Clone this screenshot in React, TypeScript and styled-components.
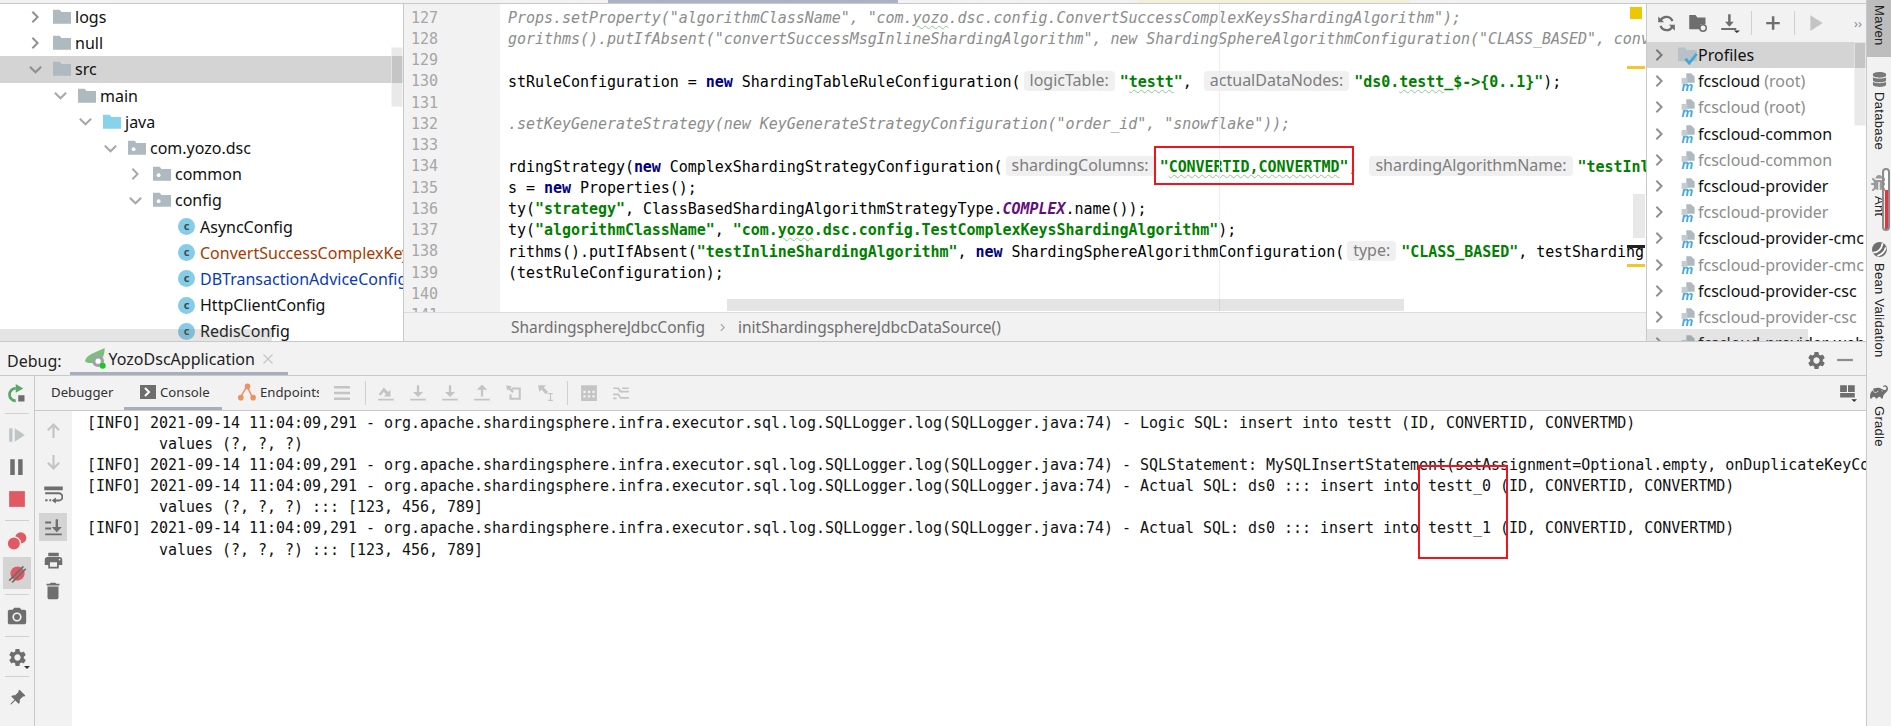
import styled, { createGlobalStyle } from "styled-components";
import { ReactNode } from "react";
import { MdSettings, MdPhotoCamera, MdPrint, MdDelete } from "react-icons/md";
import { BsPinAngleFill } from "react-icons/bs";
import { FaBug, FaDatabase } from "react-icons/fa";
import { SiGradle } from "react-icons/si";

const GlobalStyle = createGlobalStyle`
  html, body {
    margin: 0;
    padding: 0;
    background: #fff;
  }
`;

const UI_FONT = `"Noto Sans", "Open Sans", sans-serif`;
const MONO_FONT = `"DejaVu Sans Mono", "Liberation Mono", monospace`;
const PANEL = "#f2f2f2";
const LINE = "#c9c9c9";
const DARK = "#6e6e6e";

const Page = styled.div`
  position: relative;
  width: 1891px;
  height: 726px;
  overflow: hidden;
  display: flex;
  background: ${PANEL};
  font-family: ${UI_FONT};
`;

const Main = styled.div`
  flex: 1;
  min-width: 0;
  display: flex;
  flex-direction: column;
`;

const TopStrip = styled.div`
  height: 3px;
  display: flex;
  flex: none;
`;

const StripPiece = styled.div<{ $w: number; $bg?: string }>`
  width: ${(p) => p.$w}px;
  background: ${(p) => p.$bg ?? "transparent"};
`;

const TopPane = styled.div`
  height: 339px;
  flex: none;
  display: flex;
  border-top: 1px solid ${LINE};
  border-bottom: 1px solid ${LINE};
  box-sizing: border-box;
`;

/* project tree */
const Tree = styled.div`
  position: relative;
  width: 403px;
  flex: none;
  background: #fff;
  overflow: hidden;
  border-right: 1px solid ${LINE};
`;

const TreeRow = styled.div<{ $level: number; $selected?: boolean; $color?: string }>`
  height: 26.2px;
  display: flex;
  align-items: center;
  box-sizing: border-box;
  padding-left: ${(p) => 28 + p.$level * 25}px;
  background: ${(p) => (p.$selected ? "#d4d4d4" : "transparent")};
  color: ${(p) => p.$color ?? "#111"};
  font-size: 16px;
  white-space: nowrap;
`;

const TreeArrow = styled.span`
  width: 25px;
  flex: none;
  display: flex;
  align-items: center;
`;

const TreeLabel = styled.span`
  margin-left: 4px;
`;

const ClassBadge = styled.span`
  width: 17px;
  height: 17px;
  flex: none;
  margin-left: 25px;
  border-radius: 50%;
  background: #85cde6;
  color: #3f4a50;
  font: bold 11px/16px ${UI_FONT};
  text-align: center;
`;

const ClassLabel = styled.span`
  margin-left: 5px;
`;

const VScroll = styled.div<{ $top: number; $h: number; $right?: number }>`
  position: absolute;
  right: ${(p) => p.$right ?? 0}px;
  top: ${(p) => p.$top}px;
  width: 12px;
  height: ${(p) => p.$h}px;
  background: rgba(120, 120, 120, 0.16);
  border: 1px solid rgba(255, 255, 255, 0.5);
  box-sizing: border-box;
`;

const HScroll = styled.div<{ $left: number; $w: number; $bottom: number }>`
  position: absolute;
  left: ${(p) => p.$left}px;
  bottom: ${(p) => p.$bottom}px;
  width: ${(p) => p.$w}px;
  height: 12px;
  background: rgba(120, 120, 120, 0.2);
`;

/* editor */
const Editor = styled.div`
  position: relative;
  flex: 1;
  min-width: 0;
  display: flex;
  flex-direction: column;
  background: #fff;
`;

const EditorBody = styled.div`
  flex: 1;
  min-height: 0;
  display: flex;
  overflow: hidden;
  font: 15px ${MONO_FONT};
  letter-spacing: -0.04px;
`;

const Gutter = styled.div`
  width: 96px;
  flex: none;
  padding: 3.5px 0 0 7px;
  box-sizing: border-box;
  background: ${PANEL};
  color: #a6a6a6;
`;

const GutterNum = styled.div`
  height: 21.25px;
  line-height: 21.25px;
`;

const Code = styled.div`
  flex: 1;
  min-width: 0;
  padding: 3.5px 0 0 8px;
  overflow: hidden;
  box-sizing: border-box;
`;

const CodeLine = styled.div<{ $muted?: boolean }>`
  height: 21.25px;
  line-height: 21.25px;
  white-space: pre;
  color: ${(p) => (p.$muted ? "#8c8c8c" : "#000")};
  font-style: ${(p) => (p.$muted ? "italic" : "normal")};
`;

const Kw = styled.span`
  color: #000080;
  font-weight: bold;
`;

const Str = styled.span`
  color: #008000;
  font-weight: bold;
`;

const Const = styled.span`
  color: #660e7a;
  font-weight: bold;
  font-style: italic;
`;

const Typo = styled.span`
  text-decoration: underline wavy #8ec98e;
  text-decoration-thickness: 1px;
  text-underline-offset: 2px;
`;

const Hint = styled.span`
  display: inline-block;
  height: 20px;
  margin: 0 5px 0 3px;
  padding: 0 6px;
  border-radius: 4px;
  background: #f0f0f0;
  color: #7d7d7d;
  font: 16px/19px ${UI_FONT};
  letter-spacing: 0;
  vertical-align: 1px;
`;

const Breadcrumb = styled.div`
  height: 29px;
  flex: none;
  display: flex;
  align-items: center;
  padding-left: 107px;
  background: ${PANEL};
  border-top: 1px solid #dcdcdc;
  color: #6f6f6f;
  font-size: 15.5px;
  box-sizing: border-box;
`;

const CrumbArrow = styled.span`
  display: flex;
  margin: 0 11px 0 13px;
`;

const Marker = styled.div<{ $top: number; $h: number; $w: number; $bg: string; $right: number }>`
  position: absolute;
  top: ${(p) => p.$top}px;
  right: ${(p) => p.$right}px;
  width: ${(p) => p.$w}px;
  height: ${(p) => p.$h}px;
  background: ${(p) => p.$bg};
`;

const Guide = styled.div`
  position: absolute;
  top: 0;
  bottom: 30px;
  left: 815px;
  width: 1px;
  background: #ececec;
`;

/* maven */
const Maven = styled.div`
  position: relative;
  width: 220px;
  flex: none;
  display: flex;
  flex-direction: column;
  overflow: hidden;
  background: #fff;
  border-left: 1px solid ${LINE};
  box-sizing: border-box;
`;

const MavenBar = styled.div`
  height: 38px;
  flex: none;
  display: flex;
  align-items: center;
  padding-left: 3px;
  background: ${PANEL};
`;

const BarButton = styled.span<{ $w?: number }>`
  width: ${(p) => p.$w ?? 32}px;
  height: 30px;
  flex: none;
  display: flex;
  align-items: center;
  justify-content: center;
`;

const BarSep = styled.span<{ $left?: number; $right?: number }>`
  width: 1px;
  height: 24px;
  flex: none;
  margin: 0 ${(p) => p.$right ?? 5}px 0 ${(p) => p.$left ?? 5}px;
  background: #d0d0d0;
`;

const More = styled.span`
  margin-left: auto;
  margin-right: 4px;
  color: #8c8c8c;
  font-size: 13px;
`;

const MavenRow = styled.div<{ $selected?: boolean; $dim?: boolean }>`
  height: 26.2px;
  flex: none;
  display: flex;
  align-items: center;
  padding-left: 5px;
  background: ${(p) => (p.$selected ? "#d4d4d4" : "transparent")};
  color: ${(p) => (p.$dim ? "#8c8c8c" : "#111")};
  font-size: 16px;
  white-space: nowrap;
`;

const MavenArrow = styled.span`
  width: 26px;
  flex: none;
  display: flex;
`;

const MavenName = styled.span<{ $gap?: number }>`
  margin-left: ${(p) => p.$gap ?? 1}px;
`;

const Root = styled.span`
  color: #8c8c8c;
`;

/* debug tool window */
const DebugHead = styled.div`
  height: 34px;
  flex: none;
  display: flex;
  align-items: center;
  padding-left: 7px;
  border-bottom: 1px solid ${LINE};
  box-sizing: border-box;
  color: #222;
  font-size: 16px;
`;

const DebugLabel = styled.span`
  padding-top: 4px;
`;

const DebugTab = styled.div`
  height: 100%;
  display: flex;
  align-items: center;
  gap: 3px;
  margin-left: 8px;
  padding: 3px 14px 0 15px;
  border-bottom: 3px solid #a7afbf;
  box-sizing: border-box;
`;

const TabClose = styled.span`
  display: flex;
  margin-left: 4px;
`;

const HeadTools = styled.div`
  margin-left: auto;
  display: flex;
  align-items: center;
  gap: 9px;
  padding: 3px 12px 0 0;
`;

const DebugBody = styled.div`
  flex: 1;
  min-height: 0;
  display: flex;
`;

const RunColumn = styled.div`
  width: 35px;
  flex: none;
  display: flex;
  flex-direction: column;
  padding-top: 2px;
  box-sizing: border-box;
  border-right: 1px solid ${LINE};
`;

const ColButton = styled.span<{ $on?: boolean }>`
  position: relative;
  height: 32px;
  width: 28px;
  flex: none;
  margin-left: 3px;
  display: flex;
  align-items: center;
  justify-content: center;
  background: ${(p) => (p.$on ? "#d4d4d4" : "transparent")};
`;

const Caret = styled.span`
  position: absolute;
  right: 1px;
  bottom: 4px;
  width: 0;
  height: 0;
  border-left: 3px solid transparent;
  border-right: 3px solid transparent;
  border-top: 3px solid #333;
`;

const ColSep = styled.div<{ $top: number; $bottom: number }>`
  height: 1px;
  flex: none;
  margin: ${(p) => p.$top}px 5px ${(p) => p.$bottom}px;
  background: #d0d0d0;
`;

const DebugContent = styled.div`
  flex: 1;
  min-width: 0;
  display: flex;
  flex-direction: column;
`;

const ToolRow = styled.div`
  height: 35px;
  flex: none;
  display: flex;
  align-items: center;
  border-bottom: 1px solid ${LINE};
  box-sizing: border-box;
  font-size: 13.2px;
  color: #333;
`;

const SubTab = styled.div<{ $w: number; $on?: boolean }>`
  width: ${(p) => p.$w}px;
  height: 100%;
  flex: none;
  display: flex;
  align-items: center;
  justify-content: flex-start;
  gap: 4px;
  padding-left: 16px;
  box-sizing: border-box;
  overflow: hidden;
  white-space: nowrap;
  border-bottom: 3px solid ${(p) => (p.$on ? "#a7afbf" : "transparent")};
`;

const ToolRight = styled.span`
  margin-left: auto;
  margin-right: 9px;
  display: flex;
`;

const ConsoleWrap = styled.div`
  flex: 1;
  min-height: 0;
  display: flex;
`;

const SideColumn = styled.div`
  width: 37px;
  flex: none;
  display: flex;
  flex-direction: column;
`;

const SideButton = styled.span<{ $on?: boolean; $h: number }>`
  height: ${(p) => p.$h}px;
  width: 28px;
  margin-left: 4px;
  flex: none;
  display: flex;
  align-items: center;
  justify-content: center;
  background: ${(p) => (p.$on ? "#d4d4d4" : "transparent")};
`;

const ConsoleText = styled.div`
  flex: 1;
  min-width: 0;
  padding: 2px 0 0 15px;
  overflow: hidden;
  background: #fff;
  color: #111;
  font: 15px ${MONO_FONT};
  letter-spacing: -0.03px;
`;

const LogLine = styled.div`
  height: 21.1px;
  line-height: 21.1px;
  white-space: pre;
`;

/* right tool strip */
const ToolStrip = styled.div`
  width: 25px;
  flex: none;
  display: flex;
  flex-direction: column;
  align-items: stretch;
  border-left: 1px solid ${LINE};
  box-sizing: border-box;
  font: 13px "Liberation Sans", Arial, sans-serif;
  letter-spacing: 0.3px;
  color: #222;
`;

const StripItem = styled.div<{ $on?: boolean }>`
  display: flex;
  flex-direction: column;
  align-items: center;
  gap: 5px;
  box-sizing: border-box;
  height: ${(p) => (p.$on ? "57px" : "auto")};
  padding: ${(p) => (p.$on ? "5px 0 0" : "15px 0 10px")};
  background: ${(p) => (p.$on ? "#bdbdbd" : "transparent")};
`;

const StripText = styled.span`
  writing-mode: vertical-rl;
  line-height: 24px;
`;

const RedBox = styled.div<{ $x: number; $y: number; $w: number; $h: number }>`
  position: absolute;
  left: ${(p) => p.$x}px;
  top: ${(p) => p.$y}px;
  width: ${(p) => p.$w}px;
  height: ${(p) => p.$h}px;
  border: 2px solid #f0141e;
  box-sizing: border-box;
`;

const AntMark = styled.div`
  position: absolute;
  left: 1882px;
  top: 168px;
  width: 8px;
  height: 63px;
  border: 2px solid #8c8c8c;
  border-radius: 4px;
  box-sizing: border-box;
  background: linear-gradient(#fff 0 20px, #e8323c 20px);
  background-size: 3px 100%;
  background-repeat: no-repeat;
  background-position: center;
`;

/* small drawings */
const Glyph = styled.svg.attrs({ viewBox: "0 0 16 16" })<{ $size?: number }>`
  width: ${(p) => p.$size ?? 18}px;
  height: ${(p) => p.$size ?? 18}px;
  flex: none;
  display: block;
`;

const Chevron = ({ open, color = "#8f8f8f", size = 14 }: { open?: boolean; color?: string; size?: number }) => (
  <Glyph $size={size}>
    <polyline
      points={open ? "2,5 8,11 14,5" : "5,2 11,8 5,14"}
      fill="none"
      stroke={color}
      strokeWidth="2.2"
    />
  </Glyph>
);

const Folder = ({ color = "#aeb9c0", pkg }: { color?: string; pkg?: boolean }) => (
  <Glyph $size={18}>
    <path d="M0 1.500h6l1.500 2H16V14H0z" fill={color} />
    {pkg && <circle cx="5" cy="9" r="1.7" fill="#fff" />}
  </Glyph>
);

const ProfilesIcon = () => (
  <Glyph $size={20}>
    <path d="M0 2h5.500L7 4h8v9H0z" fill="#b7c1c7" />
    <polyline points="6,11 9,14.500 15,7" fill="none" stroke="#3fa9d9" strokeWidth="2.2" />
  </Glyph>
);

const MavenFile = () => (
  <Glyph $size={19}>
    <path d="M7 1h4l3 3v5H7z" fill="#aeb9c0" />
    <path d="M3 5h5v5H3z" fill="#c3ccd1" />
    <text x="3" y="15.6" fontSize="11" fontStyle="italic" fontWeight="bold" fill="#3fa9d9" fontFamily="Liberation Sans">
      m
    </text>
  </Glyph>
);

const Refresh = () => (
  <Glyph $size={19}>
    <path d="M13 6a5.500 5.500 0 0 0-9.800-1M3 10a5.500 5.500 0 0 0 9.800 1" fill="none" stroke={DARK} strokeWidth="2" />
    <path d="M1 2v5h5zM15 14V9h-5z" fill={DARK} />
  </Glyph>
);

const FolderRefresh = () => (
  <Glyph $size={20}>
    <path d="M1 1.500h5L7.500 3.500H14V9h-4v4H1z" fill={DARK} />
    <circle cx="12" cy="12" r="2.6" fill="none" stroke={DARK} strokeWidth="1.2" />
  </Glyph>
);

const DownloadMenu = () => (
  <Glyph $size={20}>
    <path d="M6.500 1h2v6H11L7.500 11 4 7h2.500zM1 12h12v1.600H1z" fill={DARK} />
    <path d="M11 14h5l-2.500 2z" fill="#333" />
  </Glyph>
);

const Plus = () => (
  <Glyph $size={18}>
    <path d="M7 2h2.200v5H14v2.200H9.200V14H7V9.200H2V7h5z" fill={DARK} />
  </Glyph>
);

const PlayDim = () => (
  <Glyph $size={18}>
    <path d="M3 1l11 7-11 7z" fill="#c4c4c4" />
  </Glyph>
);

const Rerun = () => (
  <Glyph $size={20}>
    <path d="M7 3.500a5 5 0 1 0 0 10" fill="none" stroke="#59a869" strokeWidth="2.2" />
    <path d="M7 0l6 3.500L7 7z" fill="#59a869" />
    <rect x="9" y="9" width="5" height="5" fill={DARK} />
  </Glyph>
);

const Resume = () => (
  <Glyph>
    <path d="M1 2h3v12H1zM6 2l9 6-9 6z" fill="#bfc4c6" />
  </Glyph>
);

const Pause = () => (
  <Glyph>
    <path d="M2 1h4v14H2zM9 1h4v14H9z" fill={DARK} />
  </Glyph>
);

const Stop = () => (
  <Glyph>
    <rect x="1" y="1" width="14" height="14" fill="#e05a64" />
  </Glyph>
);

const Breakpoints = () => (
  <Glyph $size={20}>
    <circle cx="11" cy="5.500" r="4.500" fill="#e05a64" />
    <circle cx="5.500" cy="10" r="5.300" fill="#e05a64" stroke={PANEL} strokeWidth="1" />
  </Glyph>
);

const Muted = () => (
  <Glyph $size={19}>
    <circle cx="8" cy="8" r="6" fill="#e05a64" />
    <path d="M1 14L13 2M3.500 15.500L15 4" stroke={DARK} strokeWidth="1.4" />
  </Glyph>
);

const ArrowUpDim = ({ down }: { down?: boolean }) => (
  <Glyph $size={17}>
    <path
      d={down ? "M8 15L2 9l1.400-1.400L7 11V1h2v10l3.600-3.400L14 9z" : "M8 1l6 6-1.400 1.400L9 5v10H7V5L3.400 8.400 2 7z"}
      fill="#c4c4c4"
    />
  </Glyph>
);

const Wrap = () => (
  <Glyph $size={19}>
    <path d="M1 2h14v1.600H1zM1 7h11.500a2.500 2.500 0 0 1 0 6H9" fill="none" stroke={DARK} strokeWidth="1.6" />
    <path d="M10 10.500v5L6.500 13zM1 12h2v1.600H1zM4.500 12H6v1.600H4.500z" fill={DARK} />
  </Glyph>
);

const ScrollEnd = () => (
  <Glyph $size={19}>
    <path d="M1 3h5v1.600H1zM1 8h5v1.600H1zM1 13h14v1.600H1zM9.800 1h2v6.500H15l-4.200 4.500L6.500 7.500h3.300z" fill={DARK} />
  </Glyph>
);

const Hamburger = () => (
  <Glyph $size={16}>
    <path d="M0 1h16v2.600H0zM0 6.700h16v2.600H0zM0 12.400h16V15H0z" fill="#c4c4c4" />
  </Glyph>
);

const ToolStepOver = () => (
  <Glyph>
    <path d="M1 13h14v1.600H1zM1.500 9L6 3l4 4 2-2v6H6l2-2-2-2-3 3.500z" fill="#c4c4c4" />
  </Glyph>
);

const ToolDown = ({ up }: { up?: boolean }) => (
  <Glyph>
    <path d={up ? "M7 11V5H3.500L8 0.500 12.500 5H9v6zM1 13h14v1.600H1z" : "M7 1h2v6h3.500L8 11.500 3.500 7H7zM1 13h14v1.600H1z"} fill="#c4c4c4" />
  </Glyph>
);

const ToolDrop = () => (
  <Glyph>
    <path d="M1 1l5 1-1.300 1.300L8 6.500 6.500 8 3.300 4.700 2 6zM6 3h8v11H4V9h1.800v3.200h6.400V4.800H6z" fill="#c4c4c4" />
  </Glyph>
);

const ToolCursor = () => (
  <Glyph>
    <path d="M1 1h7L6 3l4 4-2 2-4-4-2 2zM10 8h4v1h-1.500v5H14v1h-4v-1h1.500V9H10z" fill="#c4c4c4" />
  </Glyph>
);

const ToolTable = () => (
  <Glyph>
    <path fillRule="evenodd" d="M1 1h14v14H1zM3 6v2h2V6zM7 6v2h2V6zM11 6v2h2V6zM3 10v2h2v-2zM7 10v2h2v-2zM11 10v2h2v-2z" fill="#c4c4c4" />
  </Glyph>
);

const ToolThreads = () => (
  <Glyph>
    <path d="M1 3h5l2 3h7v1.500H7L5 4.500H1zM1 8.500h5L8 11.500h7V13H7.200l-2-3H1zM9 3h6v1.500H9zM1 12h3v1.500H1z" fill="#c4c4c4" />
  </Glyph>
);

const LeafIcon = () => (
  <Glyph $size={21}>
    <path d="M15 0c0 6-2 10-7 11S1 11 0 10c1-5 7-6 15-10z" fill="#7cbf7c" />
    <circle cx="10" cy="10" r="4.500" fill="#9aa4aa" />
    <circle cx="10" cy="10" r="2" fill="#fff" />
    <circle cx="13.500" cy="13.500" r="2.300" fill="#22c422" />
  </Glyph>
);

const CloseX = () => (
  <Glyph $size={12}>
    <path d="M2 2l12 12M14 2L2 14" stroke="#c4c4c4" strokeWidth="1.500" />
  </Glyph>
);

const ConsoleIcon = () => (
  <Glyph $size={16}>
    <rect width="16" height="14" y="1" fill={DARK} />
    <polyline points="5,4 9,8 5,12" fill="none" stroke="#fff" strokeWidth="2" />
  </Glyph>
);

const EndpointsIcon = () => (
  <Glyph $size={18}>
    <path d="M2 13L8 3l5 10" fill="none" stroke="#e8916a" strokeWidth="1.300" />
    <circle cx="8.500" cy="3" r="2.500" fill="#ee9060" />
    <circle cx="2.500" cy="13" r="2.500" fill="#ee9060" />
    <circle cx="13.500" cy="13" r="2.500" fill="#ee9060" />
  </Glyph>
);

const LayoutIcon = () => (
  <Glyph $size={18}>
    <path d="M1 1h6v6H1zM8 1h6v6H8zM1 8h13v4H1z" fill={DARK} />
    <path d="M11 13.500h5L13.500 16z" fill="#333" />
  </Glyph>
);

const BeanIcon = () => (
  <Glyph $size={17}>
    <circle cx="8" cy="8" r="7" fill={DARK} />
    <path d="M2 11c4 0 8-3 9-9M6 14c3-1 7-4 8-8" stroke="#fff" strokeWidth="1.600" fill="none" />
  </Glyph>
);

const treeRows = [
  { level: 0, open: false, name: "logs" },
  { level: 0, open: false, name: "null" },
  { level: 0, open: true, name: "src", selected: true },
  { level: 1, open: true, name: "main" },
  { level: 2, open: true, name: "java", color: "#88d2ee" },
  { level: 3, open: true, name: "com.yozo.dsc", pkg: true },
  { level: 4, open: false, name: "common", pkg: true },
  { level: 4, open: true, name: "config", pkg: true },
];

const classRows = [
  { name: "AsyncConfig" },
  { name: "ConvertSuccessComplexKeysShardingAlgorithm", color: "#a83a00" },
  { name: "DBTransactionAdviceConfig", color: "#0a3cae" },
  { name: "HttpClientConfig" },
  { name: "RedisConfig" },
];

const mavenRows = [
  { name: "fcscloud", root: true },
  { name: "fcscloud", root: true, dim: true },
  { name: "fcscloud-common" },
  { name: "fcscloud-common", dim: true },
  { name: "fcscloud-provider" },
  { name: "fcscloud-provider", dim: true },
  { name: "fcscloud-provider-cmc" },
  { name: "fcscloud-provider-cmc", dim: true },
  { name: "fcscloud-provider-csc" },
  { name: "fcscloud-provider-csc", dim: true },
  { name: "fcscloud-provider-web" },
];

const gutterNums = [127, 128, 129, 130, 131, 132, 133, 134, 135, 136, 137, 138, 139, 140, 141];

const PREFIX = "org.apache.shardingsphere.infra.executor.sql.log.SQLLogger.log(SQLLogger.java:74)";
const INFO = `[INFO] 2021-09-14 11:04:09,291 - ${PREFIX} - `;

const logLines = [
  `${INFO}Logic SQL: insert into testt (ID, CONVERTID, CONVERTMD)`,
  "        values (?, ?, ?)",
  `${INFO}SQLStatement: MySQLInsertStatement(setAssignment=Optional.empty, onDuplicateKeyColumns=Optional.empty)`,
  `${INFO}Actual SQL: ds0 ::: insert into testt_0 (ID, CONVERTID, CONVERTMD)`,
  "        values (?, ?, ?) ::: [123, 456, 789]",
  `${INFO}Actual SQL: ds0 ::: insert into testt_1 (ID, CONVERTID, CONVERTMD)`,
  "        values (?, ?, ?) ::: [123, 456, 789]",
];

const CodeLines = (): ReactNode => (
  <>
    <CodeLine $muted>
      Props.setProperty("algorithmClassName", "com.<Typo>yozo</Typo>.dsc.config.ConvertSuccessComplexKeysShardingAlgorithm");
    </CodeLine>
    <CodeLine $muted>
      gorithms().putIfAbsent("convertSuccessMsgInlineShardingAlgorithm", new ShardingSphereAlgorithmConfiguration("CLASS_BASED", conv
    </CodeLine>
    <CodeLine />
    <CodeLine>
      stRuleConfiguration = <Kw>new</Kw> ShardingTableRuleConfiguration(<Hint>logicTable:</Hint>
      <Str>"<Typo>testt</Typo>"</Str>, <Hint>actualDataNodes:</Hint>
      <Str>"ds0.<Typo>testt</Typo>_$-&gt;{"{"}0..1{"}"}"</Str>);
    </CodeLine>
    <CodeLine />
    <CodeLine $muted>
      .setKeyGenerateStrategy(new KeyGenerateStrategyConfiguration("order_id", "snowflake"));
    </CodeLine>
    <CodeLine />
    <CodeLine>
      rdingStrategy(<Kw>new</Kw> ComplexShardingStrategyConfiguration(<Hint>shardingColumns:</Hint>
      <Str>"<Typo>CONVERTID,CONVERTMD</Typo>"</Str>, <Hint>shardingAlgorithmName:</Hint>
      <Str>"testInlineShardingAlgorithm"</Str>
    </CodeLine>
    <CodeLine>
      s = <Kw>new</Kw> Properties();
    </CodeLine>
    <CodeLine>
      ty(<Str>"strategy"</Str>, ClassBasedShardingAlgorithmStrategyType.<Const>COMPLEX</Const>.name());
    </CodeLine>
    <CodeLine>
      ty(<Str>"algorithmClassName"</Str>, <Str>"com.<Typo>yozo</Typo>.dsc.config.TestComplexKeysShardingAlgorithm"</Str>);
    </CodeLine>
    <CodeLine>
      rithms().putIfAbsent(<Str>"testInlineShardingAlgorithm"</Str>, <Kw>new</Kw> ShardingSphereAlgorithmConfiguration(<Hint>type:</Hint>
      <Str>"CLASS_BASED"</Str>, testSharding.
    </CodeLine>
    <CodeLine>(testRuleConfiguration);</CodeLine>
  </>
);

const App = () => {
  return (
    <Page>
      <GlobalStyle />
      <Main>
        <TopStrip>
          <StripPiece $w={608} />
          <StripPiece $w={290} $bg="#a9b3c4" />
          <StripPiece $w={240} />
          <StripPiece $w={272} $bg="#f2f0d8" />
        </TopStrip>
        <TopPane>
          <Tree>
            {treeRows.map((r) => (
              <TreeRow key={r.name} $level={r.level} $selected={r.selected}>
                <TreeArrow>
                  <Chevron open={r.open} color={r.level === 0 ? "#8f8f8f" : "#a8a8a8"} size={r.open ? 15 : 14} />
                </TreeArrow>
                <Folder color={r.color} pkg={r.pkg} />
                <TreeLabel>{r.name}</TreeLabel>
              </TreeRow>
            ))}
            {classRows.map((r) => (
              <TreeRow key={r.name} $level={5} $color={r.color}>
                <ClassBadge>c</ClassBadge>
                <ClassLabel>{r.name}</ClassLabel>
              </TreeRow>
            ))}
            <VScroll $top={43} $h={60} />
            <HScroll $left={0} $w={272} $bottom={0} />
          </Tree>
          <Editor>
            <EditorBody>
              <Gutter>
                {gutterNums.map((n) => (
                  <GutterNum key={n}>{n}</GutterNum>
                ))}
              </Gutter>
              <Code>
                <CodeLines />
              </Code>
            </EditorBody>
            <Breadcrumb>
              ShardingsphereJdbcConfig
              <CrumbArrow>
                <Chevron color="#a8a8a8" size={9} />
              </CrumbArrow>
              initShardingsphereJdbcDataSource()
            </Breadcrumb>
            <Guide />
            <HScroll $left={323} $w={677} $bottom={30} />
            <Marker $top={3} $right={4} $w={12} $h={12} $bg="#edc800" />
            <Marker $top={62} $right={1} $w={18} $h={3} $bg="#f0c828" />
            <Marker $top={241} $right={1} $w={18} $h={3} $bg="#222" />
            <Marker $top={260} $right={1} $w={18} $h={3} $bg="#f0c828" />
            <Marker $top={190} $right={1} $w={12} $h={44} $bg="#e8e8e8" />
          </Editor>
          <Maven>
            <MavenBar>
              <BarButton>
                <Refresh />
              </BarButton>
              <BarButton>
                <FolderRefresh />
              </BarButton>
              <BarButton>
                <DownloadMenu />
              </BarButton>
              <BarSep />
              <BarButton>
                <Plus />
              </BarButton>
              <BarSep />
              <BarButton>
                <PlayDim />
              </BarButton>
              <More>››</More>
            </MavenBar>
            <MavenRow $selected>
              <MavenArrow>
                <Chevron color="#777" />
              </MavenArrow>
              <ProfilesIcon />
              <MavenName $gap={0}>Profiles</MavenName>
            </MavenRow>
            {mavenRows.map((r, i) => (
              <MavenRow key={i} $dim={r.dim}>
                <MavenArrow>
                  <Chevron />
                </MavenArrow>
                <MavenFile />
                <MavenName>
                  {r.name}
                  {r.root && <Root> (root)</Root>}
                </MavenName>
              </MavenRow>
            ))}
            <VScroll $top={38} $h={84} />
            <HScroll $left={0} $w={161} $bottom={0} />
          </Maven>
        </TopPane>
        <DebugHead>
          <DebugLabel>Debug:</DebugLabel>
          <DebugTab>
            <LeafIcon />
            YozoDscApplication
            <TabClose>
              <CloseX />
            </TabClose>
          </DebugTab>
          <HeadTools>
            <MdSettings size={21} color={DARK} />
            <Glyph $size={18}>
              <rect x="1" y="7" width="14" height="2" fill="#8c8c8c" />
            </Glyph>
          </HeadTools>
        </DebugHead>
        <DebugBody>
          <RunColumn>
            <ColButton>
              <Rerun />
            </ColButton>
            <ColSep $top={3} $bottom={5} />
            <ColButton>
              <Resume />
            </ColButton>
            <ColButton>
              <Pause />
            </ColButton>
            <ColButton>
              <Stop />
            </ColButton>
            <ColSep $top={5} $bottom={4} />
            <ColButton>
              <Breakpoints />
            </ColButton>
            <ColButton $on>
              <Muted />
            </ColButton>
            <ColSep $top={5} $bottom={6} />
            <ColButton>
              <MdPhotoCamera size={22} color={DARK} />
            </ColButton>
            <ColSep $top={3} $bottom={4} />
            <ColButton>
              <MdSettings size={21} color={DARK} />
              <Caret />
            </ColButton>
            <ColSep $top={3} $bottom={4} />
            <ColButton>
              <BsPinAngleFill size={17} color={DARK} />
            </ColButton>
          </RunColumn>
          <DebugContent>
            <ToolRow>
              <SubTab $w={89}>Debugger</SubTab>
              <SubTab $w={98} $on>
                <ConsoleIcon />
                Console
              </SubTab>
              <SubTab $w={97}>
                <EndpointsIcon />
                Endpoints
              </SubTab>
              <BarButton $w={46}>
                <Hamburger />
              </BarButton>
              <BarSep $left={0} $right={4} />
              <BarButton>
                <ToolStepOver />
              </BarButton>
              <BarButton>
                <ToolDown />
              </BarButton>
              <BarButton>
                <ToolDown />
              </BarButton>
              <BarButton>
                <ToolDown up />
              </BarButton>
              <BarButton>
                <ToolDrop />
              </BarButton>
              <BarButton>
                <ToolCursor />
              </BarButton>
              <BarSep />
              <BarButton>
                <ToolTable />
              </BarButton>
              <BarButton>
                <ToolThreads />
              </BarButton>
              <ToolRight>
                <LayoutIcon />
              </ToolRight>
            </ToolRow>
            <ConsoleWrap>
              <SideColumn>
                <SideButton $h={38}>
                  <ArrowUpDim />
                </SideButton>
                <SideButton $h={26}>
                  <ArrowUpDim down />
                </SideButton>
                <SideButton $h={38}>
                  <Wrap />
                </SideButton>
                <SideButton $on $h={28}>
                  <ScrollEnd />
                </SideButton>
                <SideButton $h={38}>
                  <MdPrint size={21} color={DARK} />
                </SideButton>
                <SideButton $h={24}>
                  <MdDelete size={22} color={DARK} />
                </SideButton>
              </SideColumn>
              <ConsoleText>
                {logLines.map((line, i) => (
                  <LogLine key={i}>{line}</LogLine>
                ))}
              </ConsoleText>
            </ConsoleWrap>
          </DebugContent>
        </DebugBody>
      </Main>
      <ToolStrip>
        <StripItem $on>
          <StripText>Maven</StripText>
        </StripItem>
        <StripItem>
          <FaDatabase size={15} color="#7a7a7a" />
          <StripText>Database</StripText>
        </StripItem>
        <StripItem>
          <FaBug size={16} color="#9a9a9a" />
          <StripText>Ant</StripText>
        </StripItem>
        <StripItem>
          <BeanIcon />
          <StripText>Bean Validation</StripText>
        </StripItem>
        <StripItem>
          <SiGradle size={18} color="#6e6e6e" />
          <StripText>Gradle</StripText>
        </StripItem>
      </ToolStrip>
      <RedBox $x={1154} $y={146} $w={200} $h={39} />
      <RedBox $x={1418} $y={465} $w={90} $h={94} />
      <AntMark />
    </Page>
  );
};

export default App;
